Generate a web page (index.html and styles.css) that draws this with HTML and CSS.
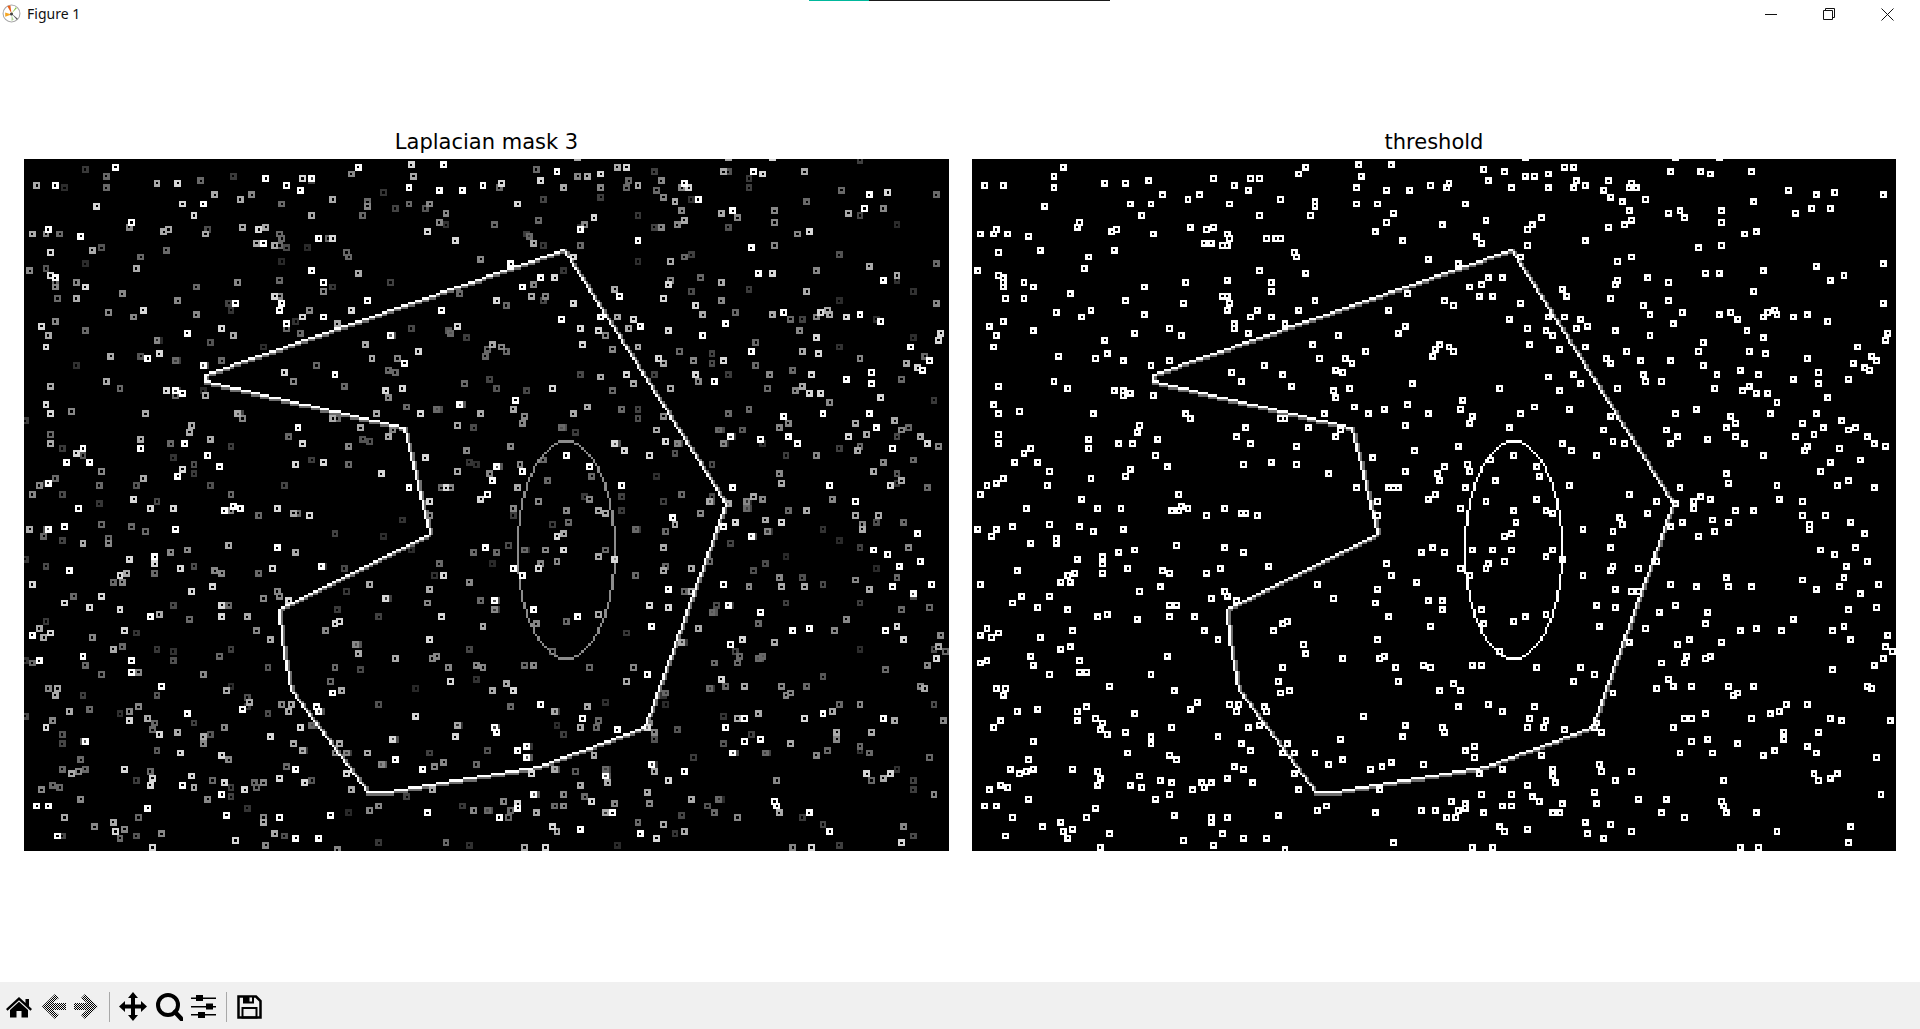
FILE: index.html
```html
<!DOCTYPE html>
<html lang="en">
<head>
  <meta charset="UTF-8" />
  <meta name="viewport" content="width=device-width, initial-scale=1.0" />
  <title>Figure 1</title>
  <link rel="stylesheet" href="styles.css">
</head>
<body>
  <div class="titlebar">
    <div class="progress"><span class="progress-done"></span><span class="progress-rest"></span></div>
    <svg class="logo" width="19" height="19" viewBox="0 0 18 18">
      <circle cx="9" cy="9" r="8" fill="#fff" stroke="#a8a8a8" stroke-width="1"/>
      <path d="M9 10 L3 8 L3 12 Z" fill="#f5a623"/>
      <path d="M9 9 L5 2 L8 1.5 Z" fill="#e8601c"/>
      <path d="M9 9 L13 3 L14 4 Z" fill="#8cc63f"/>
      <path d="M9 10 L9 16 L11 15 Z" fill="#b5d99c"/>
      <path d="M9 9 L15 14 L14 15 Z" fill="#555"/>
      <circle cx="9" cy="9.500" r="1.500" fill="#444"/>
    </svg>
    <span class="window-title">Figure 1</span>
    <div class="window-buttons">
      <div class="window-button">
        <svg width="12" height="12" viewBox="0 0 12 12"><path d="M0 6.500 H12" stroke="#111" fill="none"/></svg>
      </div>
      <div class="window-button">
        <svg width="12" height="12" viewBox="0 0 12 12" fill="none" stroke="#111"><path d="M0.500 2.500 H9.500 V11.500 H0.500 Z"/><path d="M2.500 2.500 V0.500 H11.500 V9.500 H9.500"/></svg>
      </div>
      <div class="window-button">
        <svg width="13" height="13" viewBox="0 0 13 13"><path d="M0.500 0.500 L12.500 12.500 M12.500 0.500 L0.500 12.500" stroke="#111" fill="none"/></svg>
      </div>
    </div>
  </div>

  <div class="figure">
    <div class="plot plot-left">
      <div class="plot-title">Laplacian mask 3</div>
      <canvas id="laplacian" class="plot-image" width="400" height="300"></canvas>
    </div>
    <div class="plot plot-right">
      <div class="plot-title">threshold</div>
      <canvas id="threshold" class="plot-image" width="400" height="300"></canvas>
    </div>
  </div>

  <div class="toolbar">
    <svg class="tool tool-home" width="26" height="22" viewBox="0 0 26 22">
      <path d="M13 1 L19.500 7 V3 H23 V10.300 L26 13 L24.500 14.700 L13 4.200 L1.500 14.700 L0 13 Z"/>
      <path d="M4 14 L13 5.800 L22 14 V21.500 H15.500 V15 H10.500 V21.500 H4 Z"/>
    </svg>
    <svg class="tool tool-back" width="24" height="25" viewBox="0 0 24 25">
      <defs>
        <pattern id="dither" width="2" height="2" patternUnits="userSpaceOnUse">
          <rect width="1" height="1" fill="#000"/>
          <rect x="1" y="1" width="1" height="1" fill="#000"/>
        </pattern>
      </defs>
      <path d="M0 12.500 L13 0 L17 4 L11 9 H24 V16 H11 L17 21 L13 25 Z" fill="url(#dither)"/>
    </svg>
    <svg class="tool tool-forward" width="24" height="25" viewBox="0 0 24 25">
      <path d="M24 12.500 L11 0 L7 4 L13 9 H0 V16 H13 L7 21 L11 25 Z" fill="url(#dither)"/>
    </svg>
    <span class="tool-sep sep-first"></span>
    <svg class="tool tool-move" width="28" height="29" viewBox="0 0 28 29">
      <path d="M14 0 L19 6 H16 V12.500 H22 V9 L28 14.500 L22 20 V16.500 H16 V23 H19 L14 29 L9 23 H12 V16.500 H6 V20 L0 14.500 L6 9 V12.500 H12 V6 H9 Z"/>
    </svg>
    <svg class="tool tool-zoom" width="27" height="28" viewBox="0 0 27 28" fill="none" stroke="#000">
      <circle cx="12" cy="12" r="10" stroke-width="4"/>
      <path d="M19 19 L25.500 26" stroke-width="4.500" stroke-linecap="round"/>
    </svg>
    <svg class="tool tool-sliders" width="25" height="23" viewBox="0 0 25 23">
      <path d="M0 2.500 H25 V4 H0 Z M0 11 H25 V12.500 H0 Z M0 19 H25 V20.500 H0 Z"/>
      <rect x="5" y="0" width="7" height="6"/>
      <rect x="15" y="8.500" width="7" height="6"/>
      <rect x="7" y="17" width="7" height="6"/>
    </svg>
    <span class="tool-sep sep-second"></span>
    <svg class="tool tool-save" width="25" height="24" viewBox="0 0 25 24">
      <path d="M1.500 1.500 H19 L23.500 6 V22.500 H1.500 Z" fill="none" stroke="#000" stroke-width="2.500"/>
      <rect x="6" y="1" width="11" height="7.500"/>
      <rect x="12.500" y="2.500" width="2.500" height="4" fill="#f0f0f0"/>
      <rect x="5.500" y="13" width="14" height="9.500" fill="none" stroke="#000" stroke-width="2"/>
    </svg>
  </div>

  <script src="plots.js"></script>
</body>
</html>
```

FILE: styles.css
```css
html, body { margin: 0; padding: 0; height: 100%; overflow: hidden; }
body { display: flex; flex-direction: column; background-color: #fff; color: #000; }

.titlebar { position: relative; display: flex; align-items: center; height: 30px; flex: none; font-family: "Noto Sans", "Open Sans", sans-serif; font-size: 14px; }
.progress { position: absolute; top: 0; left: 809px; display: flex; height: 1px; }
.progress-done { width: 60px; background-color: #00b89c; }
.progress-rest { width: 241px; background-color: #1a1a1a; }
.logo { margin: -3px 0 0 2px; }
.window-title { margin: -3px 0 0 6px; color: #111; }
.window-buttons { display: flex; margin: -2px 4px 0 auto; }
.window-button { display: flex; align-items: center; justify-content: center; width: 58px; height: 26px; }

.figure { flex: 1; display: flex; gap: 23px; padding: 100px 24px 0 24px; }
.plot-left { width: 925px; }
.plot-right { width: 924px; }
.plot-title { height: 24px; margin-bottom: 5px; font-family: "DejaVu Sans", sans-serif; font-size: 21px; line-height: 24px; text-align: center; color: #000; }
.plot-image { display: block; width: 100%; height: 692px; background-color: #000; image-rendering: pixelated; }

.toolbar { display: flex; align-items: center; height: 45px; flex: none; padding: 2px 0 0 6px; background-color: #f0f0f0; }
.tool { display: block; flex: none; }
.tool-back { margin-left: 10px; }
.tool-forward { margin-left: 8px; }
.tool-sep { width: 1px; height: 30px; background-color: #a8a8a8; }
.sep-first { margin-left: 11px; }
.tool-move { margin-left: 9px; }
.tool-zoom { margin-left: 9px; }
.tool-sliders { margin-left: 8px; }
.sep-second { margin-left: 10px; }
.tool-save { margin-left: 10px; }
```

FILE: plots.js
```js
// speck centres read off the threshold plot, in zoomed crop coordinates (3x)
const crops = [
  { x: 900, y: 120, pts: [489,141,461,168,461,203,254,196,303,196,614,189,677,189,746,182,788,224,690,251,753,251,434,258,725,286,940,175,1051,175,1078,175,1002,196,1044,210,1217,141,1196,161,1377,134,1383,168,1369,203,1460,210,1473,134,899,224,864,237,988,251,1141,237,1245,244,1245,258,1369,251,1432,251,1078,286,1231,286,1480,279,1460,307,1425,335,538,307,531,321,649,328,635,335,282,328,275,342,240,342,323,342,385,349,760,342,871,321,940,321,916,328,982,342,989,356,1100,356,1127,356,1141,356,909,369,933,369,968,376,982,376,420,390,295,397,642,390,1183,397,1189,411,566,411,552,446,233,453,1078,453,1217,460,295,467,309,474,309,488,309,502,372,488,393,501,732,501,857,487,982,480,1113,487,1113,515,510,522,316,536,372,536,677,543,850,550,968,529,982,529,989,550,982,571,1245,543,1467,571,1197,571,1071,571,572,571,468,578,545,591,732,584,1050,591,1113,591,1002,612,1002,626,303,605,267,619,282,647,399,633,705,640,808,626,843,647,1044,640,1155,612,1314,647,1494,640,614,661,275,681,1238,674,621,702,476,709,586,716,670,723,808,723,753,737,1397,695,1259,716,1335,716,1355,730,1092,737,995,758,1148,765,1307,751,1328,758,1023,786,1176,800,461,786,289,800,503,806,642,813,670,813,670,827,690,820,760,827,1300,813,1349,806,1307,834,275,855,295,883,358,876,579,883,857,883,871,897,1272,883,1363,862,1404,883,1453,869,1140,897,1155,897] },
  { x: 1400, y: 150, pts: [375,21,826,21,958,21,251,58,313,65,264,86,375,79,403,79,445,72,493,51,521,51,528,86,445,113,521,113,556,106,334,113,92,106,147,99,140,113,29,120,625,86,611,120,694,99,687,113,708,113,632,141,667,155,736,148,812,65,902,65,930,72,1055,65,1165,120,1248,134,1304,127,1450,134,195,161,687,183,805,189,840,183,854,203,964,183,964,217,1186,189,1235,176,1290,176,1062,155,258,210,424,203,396,224,382,238,126,224,694,210,673,224,625,231,1034,252,1069,245,230,258,244,279,9,272,556,272,382,286,895,293,964,286,84,328,175,342,361,315,652,335,694,321,1248,349,1450,342,916,370,958,370,1089,363,1290,390,1332,376,264,383,306,383,244,404,209,411,743,383,652,390,646,404,805,397,22,432,237,439,278,439,133,453,161,467,486,418,500,439,632,446,805,453,361,460,729,467,750,494,847,487,1062,425,1450,460,958,494,992,487,1013,508,1089,501,1103,487,1124,480,1131,494,1179,501,1221,494,1283,515,327,508,542,508,563,529,528,536,382,536,15,529,438,543,459,557,646,543,750,557,819,522,1041,543,1089,564,1464,550,1457,570,909,578,390,584,119,584,105,598,98,619,147,591,161,605,556,591,480,598,895,605,681,605,1047,605,1096,612,1374,591,618,626,632,640,722,633,812,633,1221,626,1415,619,1429,633,1360,640,1394,654,1408,661,909,647,1020,660,951,674,1075,674,1256,667,445,681,521,674,729,674,736,695,785,695,1179,688,1346,688,1256,702,36,702,299,716,542,702,480,723,652,716,944,716,1047,709,1027,723,1068,730,1103,730,1283,744,189,751,22,765,181,778,403,771,507,778,888,778,1131,758,1138,765,85,792,361,792,215,799,826,792,992,799,1110,792,1248,792,632,799,445,501,493,501] },
  { x: 970, y: 420, pts: [85,45,85,72,182,86,161,100,134,128,197,128,238,155,99,176,78,190,50,197,30,225,231,197,356,58,356,86,446,72,487,72,508,17,501,38,564,58,557,107,591,141,480,148,466,169,362,176,827,24,799,52,841,72,980,79,1014,24,1111,31,1097,52,820,135,903,128,980,135,1076,162,1208,114,1159,204,1332,93,1305,155,1305,17,1402,162,1408,183,1256,204,1270,204,1283,204,1222,245,1395,225,1374,239,626,225,335,238,168,266,384,266,453,266,604,273,625,273,632,259,653,266,709,287,765,266,813,280,827,280,862,287,1222,287,23,328,78,328,64,349,127,321,238,315,328,321,370,335,460,328,259,356,259,370,182,370,619,377,765,384,820,398,446,398,494,391,1388,384,1353,398,321,418,397,412,397,432,141,453,314,460,293,467,272,488,300,488,397,460,474,446,577,453,598,460,709,460,751,446,897,439,1249,432,1263,467,1340,488,1042,494,30,495,570,502,508,516,764,516,771,530,1222,509,155,530,238,530,127,550,723,537,1090,537,1215,550,1374,544,203,564,293,571,598,557,619,557,800,544,384,592,411,585,501,599,598,592,675,592,1257,592,951,606,937,613,910,633,1381,620,702,633,307,633,51,627,85,640,30,648,64,654,210,654,744,658,1222,658] },
  { x: 1430, y: 420, pts: [119,10,237,24,84,79,396,72,424,93,251,107,181,120,501,107,521,31,549,65,584,72,708,31,743,51,722,72,833,58,888,21,916,10,916,51,944,72,1000,107,1117,10,1180,24,1152,44,1096,51,1235,3,1256,31,1276,24,1311,51,1332,72,1367,79,1131,79,1124,93,1228,86,1200,127,1290,120,1172,155,42,141,112,134,119,155,22,162,29,183,105,204,15,225,320,141,327,169,195,183,417,197,888,162,895,190,750,204,1041,197,1221,197,1256,183,1332,204,597,225,681,245,168,245,320,238,736,252,792,245,812,231,840,238,792,266,92,266,251,273,348,273,368,280,653,280,916,273,972,273,979,280,1047,238,1117,245,1117,287,1186,287,258,308,570,294,577,315,722,321,757,308,847,301,895,308,1138,315,1138,329,1263,308,459,329,549,335,854,335,805,349,1304,343,244,343,223,349,237,349,9,384,42,398,126,391,188,391,244,391,368,391,348,412,396,419,542,384,1172,391,1214,405,1276,384,223,426,174,433,167,447,92,447,681,426,1311,426,549,440,542,454,625,447,1249,440,1242,447,119,467,459,467,888,474,1242,474,1117,481,722,495,798,502,895,502,965,502,1228,502,1346,495,1158,509,1290,523,556,509,605,516,625,516,36,544,36,571,501,558,556,565,736,558,1256,571,1339,565,1346,571,153,571,687,578,833,578,285,592,348,585,251,606,160,612,1090,599,826,612,507,620,646,627,930,633,979,627,1055,633,1207,633,1242,620,1374,648,4,620] },
  { x: 970, y: 640, pts: [30,72,51,65,182,51,189,78,273,30,300,23,328,65,328,100,349,100,238,106,591,51,543,106,1000,16,1007,44,1118,58,1228,58,1243,51,937,86,1277,86,1360,79,1381,86,924,127,1284,127,78,148,106,148,99,169,415,141,612,155,958,151,931,162,1408,155,681,189,660,210,779,196,806,196,799,217,883,203,889,217,141,217,203,210,321,217,349,203,494,224,1180,231,86,245,65,266,321,245,377,238,397,252,390,273,411,287,466,279,543,293,543,314,604,266,833,266,868,259,1305,259,1298,293,189,307,744,293,813,314,951,314,1111,300,841,335,937,342,972,342,1035,342,473,342,598,349,618,363,175,363,120,390,189,390,168,397,147,404,154,411,307,390,383,397,390,418,383,439,793,380,820,390,1118,363,1076,376,1201,390,1233,383,1263,370,1360,376,972,404,508,411,771,418,570,421,605,432,92,439,113,446,58,453,481,439,515,446,695,432,723,432,702,446,667,453,848,432,987,453,1229,453,598,467,175,481,557,481,44,501,78,501,376,508,127,536,349,536,612,529,723,536,723,550,771,536,924,529,1042,515,1069,501,1215,522,1353,515,1395,515,273,550,217,564,307,571,280,577,418,584,106,591,287,598,757,584,765,591,640,605,820,598,889,598,730,619,1270,612,390,626,944,630] },
  { x: 1430, y: 640, pts: [597,10,743,16,778,3,875,10,1263,3,1367,23,1385,37,208,37,771,51,826,58,840,51,1360,58,694,72,764,72,1332,79,126,78,154,78,320,85,452,85,493,106,1207,92,70,134,92,155,29,155,431,127,715,120,729,141,681,148,785,141,896,141,972,141,1311,141,1325,148,1332,155,923,162,909,169,549,162,84,203,171,196,313,203,216,217,1069,196,1131,196,1048,217,1020,224,826,224,965,238,299,238,348,245,764,238,785,238,757,245,1200,238,1235,245,1381,245,500,252,36,265,43,280,292,265,341,265,403,272,494,265,514,279,729,265,1166,279,1062,279,1062,300,785,307,833,300,923,314,1131,321,133,321,105,335,133,356,334,349,750,342,847,342,999,349,1034,335,1159,342,1339,356,369,391,369,411,376,432,216,390,147,404,507,376,514,397,604,397,556,425,881,425,1152,404,1166,425,1200,418,1221,404,292,439,154,466,244,466,306,473,327,487,493,459,625,480,708,480,875,487,882,501,889,522,1353,466,64,487,105,494,105,508,85,515,216,501,244,501,397,494,501,494,15,515,50,535,78,535,161,521,369,521,390,521,694,521,764,532,978,521,466,549,542,556,1263,563,208,563,202,570,223,577,292,570,604,577,1041,577,473,584,466,591,521,598,1256,612,126,626,188,626,930,626,986,626] }
];

// specks too faint to survive the threshold, left plot only (same 3x crops)
const faintCrops = [
  { x: 0, y: 120, pts: [249,148,193,197,699,169,935,176,1269,266,1179,266,1338,314,1150,215,131,342,622,328,727,321,304,384,853,384,921,384,845,425,249,432,89,453,137,446,1165,487,998,501,366,522,588,584,692,571,685,550,970,591,887,605,159,605,928,570,560,640,630,667,471,660,790,681,422,709,443,716,477,702,527,723,610,737,228,737,665,723,1400,653,1233,626,1372,619,1345,632,1172,647,1456,709,1463,778,1484,806,605,813,527,813,616,827,716,883,880,786,1220,862,1311,869,1380,855] },
  { x: 300, y: 420, pts: [29,121,188,58,203,65,264,51,278,31,181,24,515,24,500,93,507,127,527,135,591,141,569,162,653,204,542,238,424,204,306,301,105,343,244,349,64,440,126,446,328,392,403,467,570,433,556,384,625,377,674,391,638,266,638,287,742,183,785,24,826,38,945,72,1118,100,1132,72,1271,72,1257,31,1292,51,1326,31,1382,72,1069,169,1229,135,1298,204,1229,231,1229,246,1090,246,965,231,853,231,757,315,959,273,1201,280,1305,308,1340,246,1360,231,1340,266,1007,329,1291,370,1354,349,1403,335,1395,433,1360,454,1228,426,1173,446,1097,440,1090,454,1249,558,1285,558,1236,578,1194,627,1146,668,979,641,112,572,133,516,258,537,230,592,105,613,584,544,584,572,424,592,833,592,708,613,168,676,507,689,1305,696,1242,731,1375,717,175,752,105,745,91,786,98,821,347,807,445,745,528,738,549,745,528,779,1000,745,979,786,1263,779,1229,807,1090,828,1097,856,910,849,861,863,765,877,236,856,57,877,36,918,347,890,473,918,584,925,765,918,785,946,840,925,889,925,951,932,1264,890,1333,897,1131,932,1062,960,1353,946,1333,967,1264,973,279,960,8,994,105,1001,140,1001,202,1001,285,1022,244,1036,388,1001,562,994,681,980,681,1015,882,1008,1396,1001,1174,1015,1056,1036,1299,1001,765,1050,826,1057,694,1064,917,1050,917,1071,923,1092,1104,1085,14,1092,29,1085,396,1112,320,1133,702,1126,854,1133,653,1154,486,1161,1222,1161,1257,1140,208,1175,521,1175,563,1175,146,1181,91,1189,382,1182,597,1192,708,1182,917,1182,1139,1189] }
];

const outline = [[233,39],[303,149],[268,246],[222,263],[156,274],[148,274],[115,230],[111,208],[110,195],[175,162],[164,116],[78,96],[78,93],[233,39]];
const W = 400, H = 300, SCALE = 2.3125;

function makeImage() {
  return { data: new Uint8Array(W * H) };
}

function plot(img, x, y, v) {
  if (x < 0 || y < 0 || x >= W || y >= H) return;
  const i = y * W + x;
  if (img.data[i] < v) img.data[i] = v;
}

function speck(img, x, y, v) {
  for (let dy = -1; dy <= 1; dy++) {
    for (let dx = -1; dx <= 1; dx++) {
      if (dx !== 0 || dy !== 0) plot(img, x + dx, y + dy, v);
    }
  }
}

// soft is the grey of a second pixel alongside, the outline reads bolder with it
function line(img, x0, y0, x1, y1, v, soft) {
  const steps = Math.max(Math.abs(x1 - x0), Math.abs(y1 - y0));
  const steep = Math.abs(y1 - y0) > Math.abs(x1 - x0);
  for (let i = 0; i <= steps; i++) {
    const x = Math.round(x0 + (x1 - x0) * i / steps);
    const y = Math.round(y0 + (y1 - y0) * i / steps);
    plot(img, x, y, v);
    if (steep) plot(img, x + 1, y, soft);
    else plot(img, x, y + 1, soft);
  }
}

// one pixel thick: steps along whichever axis the curve is flatter to
function ellipse(img, cx, cy, rx, ry, v) {
  const knee = rx * rx / Math.sqrt(rx * rx + ry * ry);
  for (let dx = -Math.floor(knee); dx <= knee; dx++) {
    const dy = Math.round(ry * Math.sqrt(1 - dx * dx / (rx * rx)));
    plot(img, cx + dx, cy + dy, v);
    plot(img, cx + dx, cy - dy, v);
  }
  const kneeY = ry * ry / Math.sqrt(rx * rx + ry * ry);
  for (let dy = -Math.floor(kneeY); dy <= kneeY; dy++) {
    const dx = Math.round(rx * Math.sqrt(1 - dy * dy / (ry * ry)));
    plot(img, cx + dx, cy + dy, v);
    plot(img, cx - dx, cy + dy, v);
  }
}

function drawShapes(img, ellipseGrey) {
  for (let i = 1; i < outline.length; i++) {
    line(img, outline[i - 1][0], outline[i - 1][1], outline[i][0], outline[i][1], 255, 110);
  }
  ellipse(img, 234, 169, 21, 47, ellipseGrey);
}

function paint(id, img) {
  const ctx = document.getElementById(id).getContext('2d');
  const out = ctx.createImageData(W, H);
  for (let i = 0; i < img.data.length; i++) {
    out.data[i * 4] = out.data[i * 4 + 1] = out.data[i * 4 + 2] = img.data[i];
    out.data[i * 4 + 3] = 255;
  }
  ctx.putImageData(out, 0, 0);
}

const left = makeImage();
const right = makeImage();

// crops overlap and neighbours land a pixel apart, keep only one speck there
const placed = [];
function isPlaced(x, y) {
  return placed.some(p => Math.abs(p[0] - x) <= 1 && Math.abs(p[1] - y) <= 1);
}

crops.forEach(crop => {
  for (let i = 0; i < crop.pts.length; i += 2) {
    const sx = crop.x + crop.pts[i] / 3;
    const sy = crop.y + crop.pts[i + 1] / 3;
    const x = Math.round((sx - 972) / SCALE);
    const y = Math.round((sy - 159) / SCALE);
    if (isPlaced(x, y)) continue;
    placed.push([x, y]);
    speck(right, x, y, 255);
    const hash = (x * 31 + y * 17) % 5;
    speck(left, x, y, [255, 215, 170, 135, 105][hash]);
  }
});

faintCrops.forEach(crop => {
  for (let i = 0; i < crop.pts.length; i += 2) {
    const x = Math.round((crop.x + crop.pts[i] / 3 - 24) / SCALE);
    const y = Math.round((crop.y + crop.pts[i + 1] / 3 - 159) / SCALE);
    speck(left, x, y, 40 + (x * 13 + y * 7) % 50);
  }
});

// the rest of the faint noise was not read off one by one, seed keeps it stable
let seed = 12345;
function rnd(n) {
  seed = (seed * 1103 + 12345) % 65536;
  return seed % n;
}
for (let i = 0; i < 260; i++) {
  const x = rnd(W), y = rnd(H);
  const sx = 24 + x * SCALE, sy = 159 + y * SCALE;
  const read = (sx < 500 && sy < 420) || (sx > 300 && sx < 770 && sy > 420 && sy < 820);
  if (!read) speck(left, x, y, 40 + rnd(50));
}

drawShapes(left, 140);
drawShapes(right, 255);

paint('laplacian', left);
paint('threshold', right);
```
